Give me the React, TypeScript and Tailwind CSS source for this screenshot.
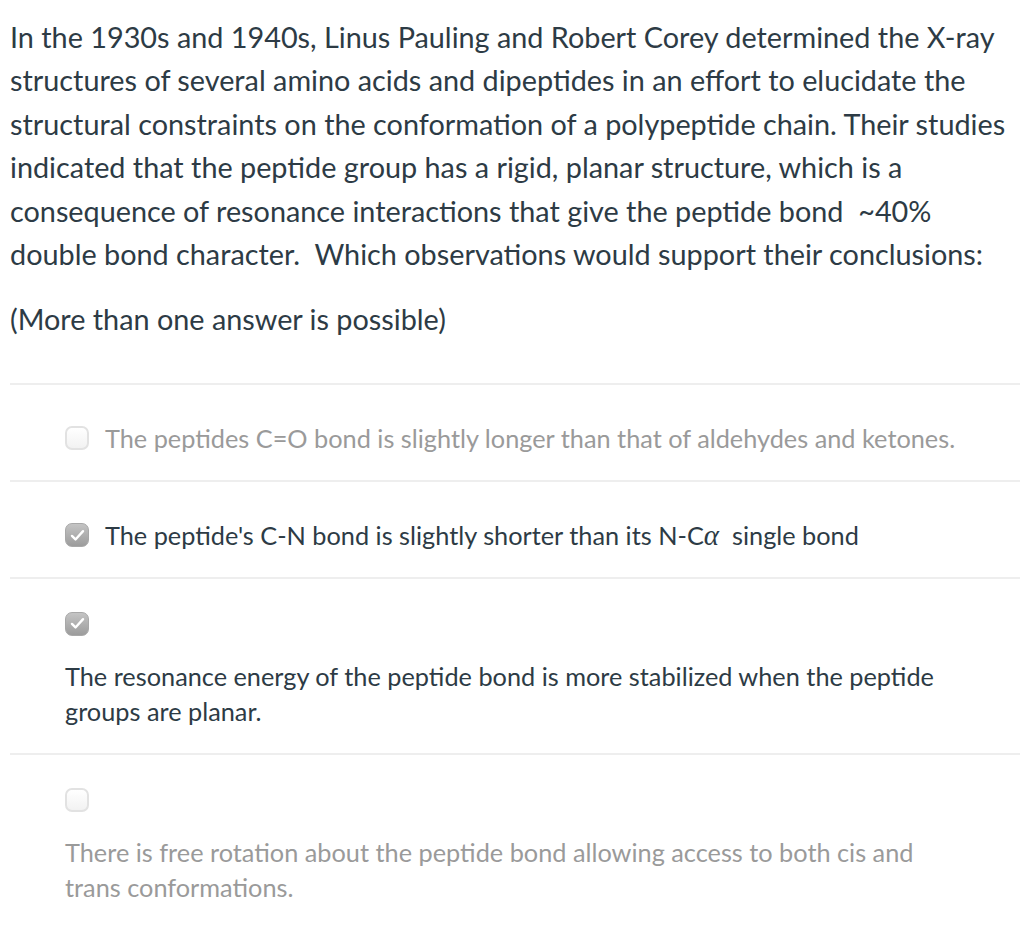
import React from "react";

// 질문 본문 + 다중 선택 답안 목록

type Option = {
  id: number;
  checked: boolean;
  stacked: boolean;
  text: React.ReactNode;
};

const options: Option[] = [
  {
    id: 1,
    checked: false,
    stacked: false,
    text: "The peptides C=O bond is slightly longer than that of aldehydes and ketones.",
  },
  {
    id: 2,
    checked: true,
    stacked: false,
    text: (
      <>
        The peptide's C-N bond is slightly shorter than its N-C
        <span className="font-['Liberation_Serif',serif] italic text-[29px]">α</span>
        &nbsp; single bond
      </>
    ),
  },
  {
    id: 3,
    checked: true,
    stacked: true,
    text: "The resonance energy of the peptide bond is more stabilized when the peptide groups are planar.",
  },
  {
    id: 4,
    checked: false,
    stacked: true,
    text: "There is free rotation about the peptide bond allowing access to both cis and trans conformations.",
  },
];

function Checkbox({ checked }: { checked: boolean }) {
  if (checked) {
    return (
      <span className="flex h-[24px] w-[24px] shrink-0 items-center justify-center rounded-[7px] border border-[#a8a8a8] bg-gradient-to-b from-[#c4c4c4] to-[#9c9c9c]">
        <svg viewBox="0 0 24 24" className="h-[19px] w-[19px]" fill="none">
          <path
            d="M5 12.5l4.5 4.5L19 6.5"
            stroke="white"
            strokeWidth="3"
            strokeLinecap="round"
            strokeLinejoin="round"
          />
        </svg>
      </span>
    );
  }
  return (
    <span className="block h-[24px] w-[24px] shrink-0 rounded-[7px] border-2 border-[#e2e2e2] bg-gradient-to-b from-white to-[#f2f2f2]" />
  );
}

export default function App() {
  return (
    <div className="min-h-[935px] bg-white px-[10px] pt-[16px] font-['Lato','Open_Sans',sans-serif] text-[#2d3b45]">
      <p className="text-[28.8px] leading-[43.4px]">
        In the 1930s and 1940s, Linus Pauling and Robert Corey determined the X-ray structures of
        several amino acids and dipeptides in an effort to elucidate the structural constraints on
        the conformation of a polypeptide chain. Their studies indicated that the peptide group has a
        rigid, planar structure, which is a consequence of resonance interactions that give the
        peptide bond &nbsp;~40% double bond character. &nbsp;Which observations would support their
        conclusions:
      </p>
      <p className="mt-[22px] text-[28.8px] leading-[43.4px]">(More than one answer is possible)</p>

      <div className="-mr-[6px] mt-[41px] border-t-2 border-[#eeeeee]">
        {options.map((o, i) => (
          <div
            key={o.id}
            className={`pl-[55px] pr-[75px] text-[25.3px] leading-[35px] ${
              i < options.length - 1 ? "border-b-2 border-[#eeeeee]" : ""
            } ${o.checked ? "text-[#2d3b45]" : "text-[#9a9a9a]"} ${
              o.stacked ? "pb-[24px] pt-[33px]" : "pb-[24px] pt-[36px]"
            }`}
          >
            {o.stacked ? (
              <div>
                <Checkbox checked={o.checked} />
                <p className="mt-[23px]">{o.text}</p>
              </div>
            ) : (
              <div className="flex items-center gap-[16px]">
                <Checkbox checked={o.checked} />
                <span className="whitespace-nowrap">{o.text}</span>
              </div>
            )}
          </div>
        ))}
      </div>
    </div>
  );
}
